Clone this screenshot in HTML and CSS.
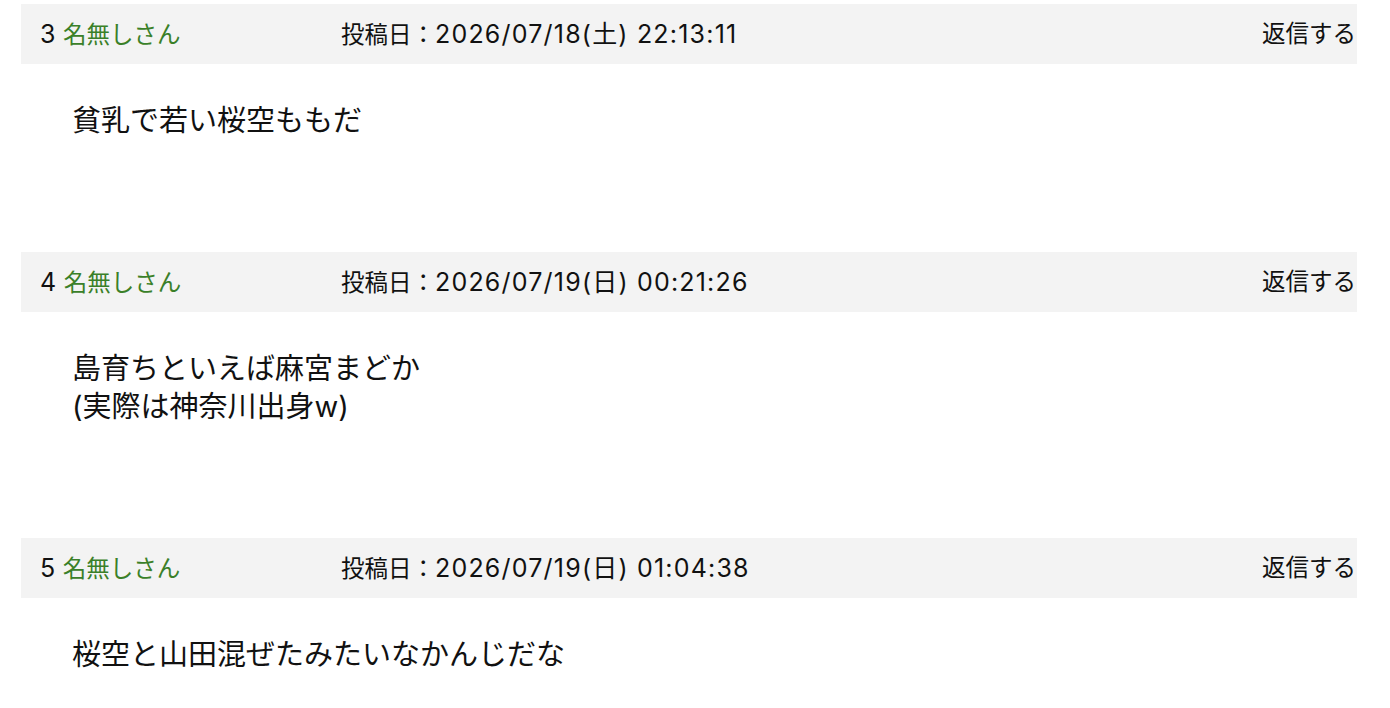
FILE: index.html
```html
<!DOCTYPE html>
<html lang="ja">
<head>
    <meta charset="UTF-8">
    <meta name="viewport" content="width=device-width, initial-scale=1.0">
    <title>レス一覧</title>
    <link rel="stylesheet" href="styles.css">
</head>
<body>
    <div class="thread">
        <div class="post">
            <div class="post-head">
                <div class="post-name"><span class="num">3</span> <span class="name">名無しさん</span></div>
                <div class="post-date">投稿日：<span class="stamp">2026/07/18(土) 22:13:11</span></div>
                <a class="reply" href="#">返信する</a>
            </div>
            <div class="post-body">貧乳で若い桜空ももだ</div>
        </div>

        <div class="post">
            <div class="post-head">
                <div class="post-name"><span class="num">4</span> <span class="name">名無しさん</span></div>
                <div class="post-date">投稿日：<span class="stamp">2026/07/19(日) 00:21:26</span></div>
                <a class="reply" href="#">返信する</a>
            </div>
            <div class="post-body">島育ちといえば麻宮まどか<br>(実際は神奈川出身w)</div>
        </div>

        <div class="post">
            <div class="post-head">
                <div class="post-name"><span class="num">5</span> <span class="name">名無しさん</span></div>
                <div class="post-date">投稿日：<span class="stamp">2026/07/19(日) 01:04:38</span></div>
                <a class="reply" href="#">返信する</a>
            </div>
            <div class="post-body">桜空と山田混ぜたみたいなかんじだな</div>
        </div>
    </div>
</body>
</html>
```

FILE: styles.css
```css
body {
    font-family: Inter, "Noto Sans CJK JP", sans-serif;
    background-color: #ffffff;
    color: #111111;
    margin: 0;
    padding: 0;
}

.thread {
    padding: 4px 33px 0 21px;
}

.post-head {
    display: flex;
    align-items: center;
    height: 60px;
    padding: 0 1px 0 19px;
    background-color: #f3f3f3;
    font-size: 23.5px;
    line-height: 28px;
}

.post-name {
    width: 301px;
    flex-shrink: 0;
}

.post-name .num {
    font-size: 25px;
    margin-right: 1px;
}

.post-name .name {
    color: #3a8028;
}

.post-date {
    flex: 1;
}

.post-date .stamp {
    font-size: 25px;
    letter-spacing: 1.2px;
}

.reply {
    color: #111111;
    text-decoration: none;
}

.post-body {
    padding: 38px 0 0 51px;
    margin-bottom: 112px;
    font-size: 29px;
    line-height: 38px;
}
```
